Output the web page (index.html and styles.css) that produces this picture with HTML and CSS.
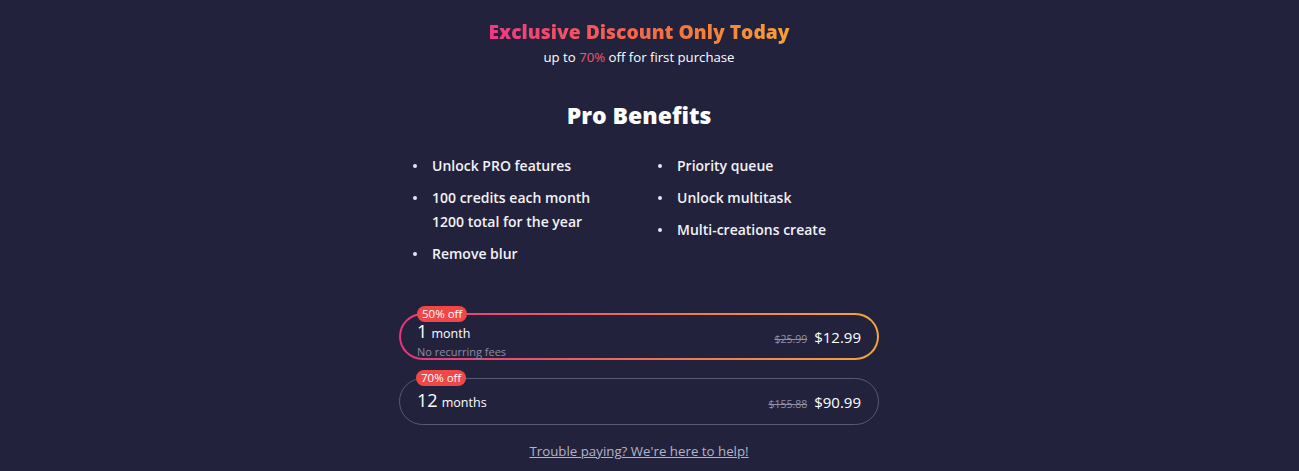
FILE: index.html
```html
<!DOCTYPE html>
<html>
<head>
<meta charset="utf-8">
<link rel="stylesheet" href="styles.css">
</head>
<body>
<main class="page">
  <section class="content">
    <h1 class="headline">Exclusive Discount Only Today</h1>
    <p class="sub">up to <span class="hot">70%</span> off for first purchase</p>
    <h2 class="benefits-title">Pro Benefits</h2>
    <div class="benefits">
      <ul class="col">
        <li>Unlock PRO features</li>
        <li>100 credits each month<br>1200 total for the year</li>
        <li>Remove blur</li>
      </ul>
      <ul class="col">
        <li>Priority queue</li>
        <li>Unlock multitask</li>
        <li>Multi-creations create</li>
      </ul>
    </div>
    <div class="plans">
      <div class="plan selected">
        <span class="badge">50% off</span>
        <div class="plan-left">
          <div class="term"><span class="num">1</span> <span class="unit">month</span></div>
          <div class="note">No recurring fees</div>
        </div>
        <div class="price"><span class="old">$25.99</span><span class="new">$12.99</span></div>
      </div>
      <div class="plan">
        <span class="badge">70% off</span>
        <div class="plan-left">
          <div class="term"><span class="num">12</span> <span class="unit">months</span></div>
        </div>
        <div class="price"><span class="old">$155.88</span><span class="new">$90.99</span></div>
      </div>
    </div>
    <a class="help" href="#">Trouble paying? We're here to help!</a>
  </section>
</main>
</body>
</html>
```
FILE: styles.css
```css
html, body {
  margin: 0;
  padding: 0;
  background: #22223d;
  height: 100%;
  overflow: hidden;
}
body {
  font-family: "Open Sans", "Noto Sans", sans-serif;
  color: #ffffff;
}
.page {
  padding-right: 21px;
  display: flex;
  justify-content: center;
}
.content {
  width: 480px;
  display: flex;
  flex-direction: column;
  align-items: center;
}
.headline {
  margin: 20px 0 0;
  font-size: 19.3px;
  font-weight: 800;
  line-height: 24px;
  background: linear-gradient(90deg, #ee3984 0%, #f4713f 60%, #f6a034 100%);
  -webkit-background-clip: text;
  background-clip: text;
  color: transparent;
}
.sub {
  margin: 4px 0 0;
  font-size: 13.2px;
  line-height: 18px;
}
.hot { color: #f0586a; }
.benefits-title {
  margin: 34px 0 0;
  font-size: 23px;
  font-weight: 800;
  line-height: 30px;
}
.benefits {
  align-self: stretch;
  display: grid;
  grid-template-columns: 245px 245px;
  padding-left: 14px;
  margin-top: 24px;
}
.col {
  list-style: none;
  margin: 0;
  padding: 0;
  display: flex;
  flex-direction: column;
  gap: 8px;
}
.col li {
  position: relative;
  padding-left: 19px;
  font-size: 14px;
  font-weight: 600;
  line-height: 24px;
  color: #f2f2f6;
}
.col li::before {
  content: "";
  position: absolute;
  left: 0;
  top: 10px;
  width: 4px;
  height: 4px;
  border-radius: 50%;
  background: #e6e6ee;
}
.plans {
  align-self: stretch;
  margin-top: 47px;
  display: flex;
  flex-direction: column;
  gap: 18px;
}
.plan {
  position: relative;
  height: 47px;
  box-sizing: border-box;
  border: 1px solid #565a78;
  border-radius: 24px;
  display: flex;
  align-items: center;
  justify-content: space-between;
  padding: 0 17px 0 17px;
}
.plan.selected {
  height: 47px;
  border: 2px solid transparent;
  background: linear-gradient(#22223d, #22223d) padding-box,
              linear-gradient(90deg, #e7357f 0%, #f07256 55%, #f5a53a 100%) border-box;
  padding: 0 16px;
}
.badge {
  position: absolute;
  top: -9px;
  left: 16px;
  background: #f04848;
  color: #fff;
  font-size: 11.5px;
  line-height: 16px;
  padding: 0 5px;
  border-radius: 8px;
}
.plan-left {
  display: flex;
  flex-direction: column;
}
.selected .plan-left { margin-top: 6px; }
.term { line-height: 22px; }
.num { font-size: 18px; }
.unit { font-size: 12.5px; }
.note {
  font-size: 11px;
  line-height: 14px;
  color: #8c8ea6;
}
.price {
  display: flex;
  align-items: baseline;
  gap: 7px;
}
.old {
  font-size: 10.5px;
  color: #8f91a8;
  text-decoration: line-through;
}
.new {
  font-size: 15px;
  color: #ffffff;
}
.help {
  margin-top: 16px;
  font-size: 13.3px;
  line-height: 20px;
  color: #b2b4c8;
  text-decoration: underline;
}
```
